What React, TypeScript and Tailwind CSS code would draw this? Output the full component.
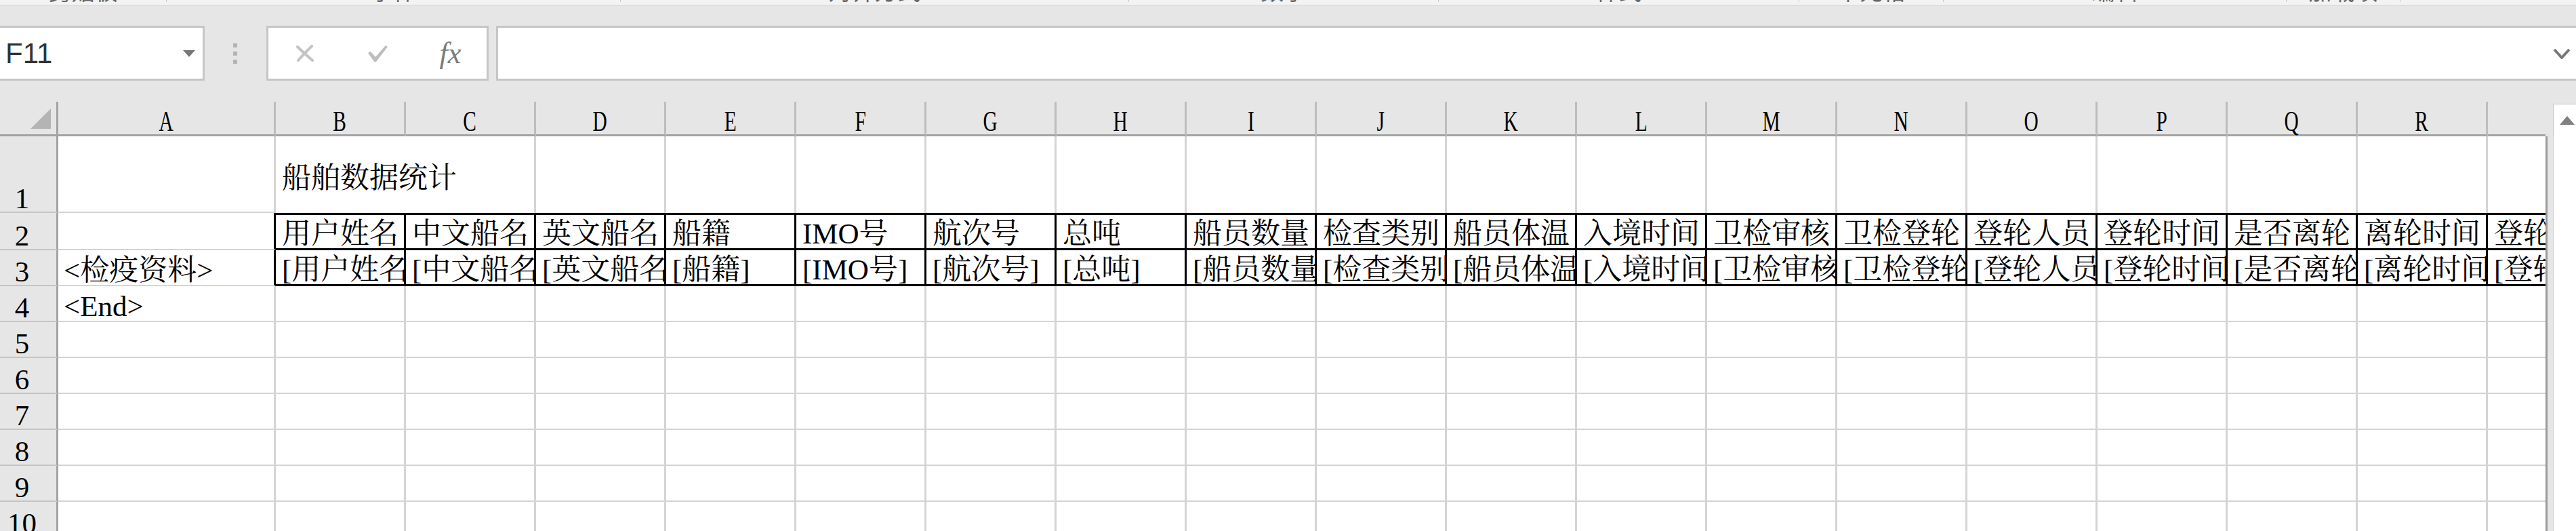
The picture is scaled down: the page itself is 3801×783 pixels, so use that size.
import React from 'react';

const LETTERS = 'ABCDEFGHIJKLMNOPQRS'.split('');

const FIELDS = [
  '用户姓名',
  '中文船名',
  '英文船名',
  '船籍',
  'IMO号',
  '航次号',
  '总吨',
  '船员数量',
  '检查类别',
  '船员体温',
  '入境时间',
  '卫检审核',
  '卫检登轮',
  '登轮人员',
  '登轮时间',
  '是否离轮',
  '离轮时间',
  '登轮地点',
];

// ribbon groups, only the bottom of their labels peeks out of the top edge
const RIBBON = [
  { w: 'w-[245px]', label: '剪贴板' },
  { w: 'w-[669px]', label: '字体' },
  { w: 'w-[749px]', label: '对齐方式' },
  { w: 'w-[456px]', label: '数字' },
  { w: 'w-[531px]', label: '样式' },
  { w: 'w-[212px]', label: '单元格' },
  { w: 'w-[505px]', label: '编辑' },
  { w: 'w-[167px]', label: '加载项' },
];

function RibbonEdge() {
  return (
    <div className="flex h-[8px] overflow-hidden border-b border-[#d4d4d4] bg-[#f3f3f3] font-['Noto_Sans_CJK_SC',sans-serif] text-[#666]">
      {RIBBON.map((g) => (
        <React.Fragment key={g.label}>
          <div className={`${g.w} shrink-0 overflow-hidden`}>
            <div className="-mt-[31px] text-center text-[34px] leading-[34px]">{g.label}</div>
          </div>
          <div className="h-[3px] w-px shrink-0 bg-[#c8c8c8]" />
        </React.Fragment>
      ))}
    </div>
  );
}

function FormulaBar() {
  return (
    <div className="mt-[30px] mb-[31px] flex h-[81px]">
      <div className="flex w-[302px] shrink-0 items-center justify-between border-y-[3px] border-r-[3px] border-[#c6c6c6] bg-white pl-[8px] pr-[11px]">
        <span className="font-['Liberation_Sans',sans-serif] text-[42px] leading-none text-[#333]">F11</span>
        <svg width="18" height="10" viewBox="0 0 18 10">
          <polygon points="0,0 18,0 9,10" fill="#777" />
        </svg>
      </div>
      <div className="ml-[42px] flex w-[6px] shrink-0 flex-col justify-center gap-[6px]">
        <div className="h-[6px] bg-[#b3b3b3]" />
        <div className="h-[6px] bg-[#b3b3b3]" />
        <div className="h-[6px] bg-[#b3b3b3]" />
      </div>
      <div className="ml-[43px] grid w-[328px] shrink-0 grid-cols-3 place-items-center border-[3px] border-[#c6c6c6] bg-white">
        <svg width="28" height="25" viewBox="0 0 28 25">
          <path d="M3 3 C 10 10, 18 17, 25 23" stroke="#c4c4c4" strokeWidth="4" fill="none" strokeLinecap="round" />
          <path d="M24 2 C 17 9, 10 16, 4 23" stroke="#c4c4c4" strokeWidth="4" fill="none" strokeLinecap="round" />
        </svg>
        <svg width="32" height="26" viewBox="0 0 32 26">
          <path d="M2 12 L6 10 L13 18 L28 1 L31 3 L14 25 L11 25 Z" fill="#bdbdbd" />
        </svg>
        <span className="font-['Liberation_Serif',serif] text-[44px] italic leading-none text-[#7b7b7b]">fx</span>
      </div>
      <div className="ml-[11px] flex flex-1 items-center justify-end border-y-[3px] border-l-[3px] border-[#c6c6c6] bg-white pr-[8px]">
        <svg width="26" height="16" viewBox="0 0 26 16">
          <polyline points="2,2 13,14 24,2" stroke="#777" strokeWidth="4" fill="none" />
        </svg>
      </div>
    </div>
  );
}

function ColumnHeader({ col }: { col: number }) {
  return (
    <div
      className={
        col === 18
          ? 'flex items-end justify-center border-b-[3px] border-[#a3a3a3] bg-[#e6e6e6] text-[42px] leading-[38px]'
          : 'flex items-end justify-center border-r-[3px] border-b-[3px] border-r-[#bdbdbd] border-b-[#a3a3a3] bg-[#e6e6e6] text-[42px] leading-[38px]'
      }
    >
      {col === 18 ? null : <span className="inline-block scale-x-[0.7]">{LETTERS[col]}</span>}
    </div>
  );
}

function RowHeader({ row }: { row: number }) {
  return (
    <div className="flex items-end justify-center border-r-[3px] border-b-2 border-r-[#a3a3a3] border-b-[#c4c4c4] bg-[#e6e6e6] pr-[18px] text-[43px] leading-[39px]">
      {row}
    </div>
  );
}

function Cell({ row, col }: { row: number; col: number }) {
  const table = col >= 1 && (row === 2 || row === 3);
  const last = col === 18;

  if (row === 1 && col === 1) {
    return (
      <div className="relative z-10 flex items-center whitespace-nowrap pl-[9px] pt-[10px] text-[43px] leading-none">
        船舶数据统计
      </div>
    );
  }

  if (table) {
    const text = row === 2 ? FIELDS[col - 1] : `[${FIELDS[col - 1]}]`;
    const edge = row === 2 ? 'border-t-[3px] border-b-[3px] border-t-black border-b-black' : 'border-b-[3px] border-b-black';
    const side = last ? '' : 'border-r-[3px] border-r-black';
    return (
      <div className={`flex items-end overflow-hidden whitespace-nowrap pl-[9px] text-[43px] leading-none ${edge} ${side}`}>
        {text}
      </div>
    );
  }

  let text: string | null = null;
  if (col === 0 && row === 3) text = '<检疫资料>';
  if (col === 0 && row === 4) text = '<End>';

  let cls = 'flex items-end overflow-hidden whitespace-nowrap pl-[8px] text-[43px] leading-none';
  if (col === 0 && (row === 2 || row === 3)) {
    cls += ' border-r-[3px] border-b-2 border-r-black border-b-[#d4d4d4]';
  } else if (row === 1 && col >= 1) {
    cls += last ? '' : ' border-r-[3px] border-r-[#d4d4d4]';
  } else {
    cls += last ? ' border-b-2 border-b-[#d4d4d4]' : ' border-r-[3px] border-b-2 border-[#d4d4d4]';
  }

  return <div className={cls}>{text}</div>;
}

function Sheet() {
  const rows = [1, 2, 3, 4, 5, 6, 7, 8, 9, 10];
  return (
    <div className="grid w-[3756px] shrink-0 grid-cols-[86px_321px_repeat(17,192px)_85px] grid-rows-[51px_113px_55px_repeat(8,53px)] bg-white">
      <div className="flex items-start justify-end border-r-[3px] border-b-[3px] border-r-[#a3a3a3] border-b-[#a3a3a3] bg-[#e6e6e6] pr-[8px] pt-[10px]">
        <svg width="30" height="30" viewBox="0 0 30 30">
          <polygon points="30,0 30,30 0,30" fill="#b4b4b4" />
        </svg>
      </div>
      {LETTERS.map((_, c) => (
        <ColumnHeader key={`h${c}`} col={c} />
      ))}
      {rows.map((r) => (
        <React.Fragment key={r}>
          <RowHeader row={r} />
          {LETTERS.map((_, c) => (
            <Cell key={`${r}-${c}`} row={r} col={c} />
          ))}
        </React.Fragment>
      ))}
    </div>
  );
}

function ScrollBar() {
  return (
    <div className="flex w-[45px] shrink-0 flex-col bg-[#e6e6e6]">
      <div className="flex h-[51px] shrink-0 pl-[11px] pt-[3px]">
        <div className="flex flex-1 items-center border-t border-l border-[#c6c6c6] bg-white pl-[9px]">
          <svg width="22" height="13" viewBox="0 0 22 13">
            <polygon points="11,0 22,13 0,13" fill="#808080" />
          </svg>
        </div>
      </div>
      <div className="flex flex-1">
        <div className="w-[3px] bg-[#9a9a9a]" />
        <div className="w-[8px] bg-[#e6e6e6]" />
        <div className="flex-1 border-l border-[#d0d0d0] bg-white" />
      </div>
    </div>
  );
}

export default function App() {
  return (
    <div className="h-[783px] w-[3801px] overflow-hidden bg-[#e6e6e6] font-['Liberation_Serif','Noto_Serif_CJK_SC','Noto_Sans_CJK_SC',serif] text-black">
      <RibbonEdge />
      <FormulaBar />
      <div className="flex h-[633px] overflow-hidden">
        <Sheet />
        <ScrollBar />
      </div>
    </div>
  );
}
